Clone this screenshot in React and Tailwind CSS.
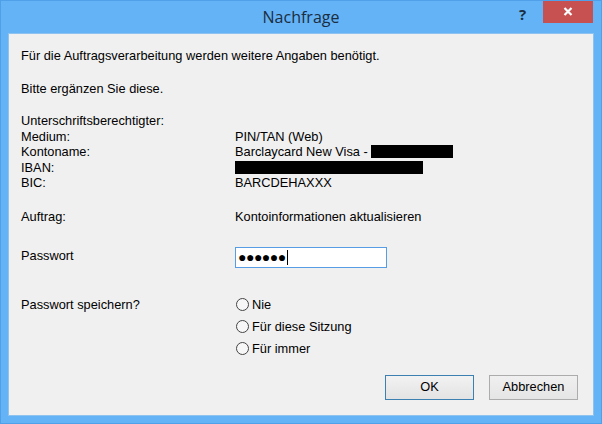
export default function App() {
  const body = { fontFamily: '"Liberation Sans", Arial, sans-serif' };

  const Radio = ({ label }) => (
    <div className="flex items-center h-[22px]">
      <span className="w-[13px] h-[13px] rounded-full border border-[#444] bg-[#f7f7f7] ml-[1px] mr-[3px]" />
      <span>{label}</span>
    </div>
  );

  return (
    <div className="w-[602px] h-[424px] bg-[#64b3f7] border border-[#4f9fe9] flex flex-col overflow-hidden">
      {/* Title bar */}
      <div className="relative h-[32px] shrink-0">
        <div
          className="absolute left-0 right-0 top-[4px] text-center text-[16px] text-[#1b2d40]"
          style={{ fontFamily: '"Open Sans", "Noto Sans", sans-serif' }}
        >
          Nachfrage
        </div>
        <div
          className="absolute left-[518px] top-[2px] text-[15px] font-bold text-[#1b2d40]"
          style={{ fontFamily: '"Open Sans", sans-serif' }}
        >
          ?
        </div>
        <div className="absolute left-[542px] top-[-1px] w-[50px] h-[23px] bg-[#c75050] flex items-center justify-center">
          <svg width="10" height="9" viewBox="0 0 10 9">
            <path d="M1.5 1 L8.5 8 M8.5 1 L1.5 8" stroke="#fff" strokeWidth="2.2" />
          </svg>
        </div>
      </div>

      {/* Client area */}
      <div
        className="flex-1 mx-[7px] mb-[7px] bg-[#f0f0f0] border border-[#8ec3f0] pl-[12px] pr-[15px] pt-[14px] text-[12.8px] text-black"
        style={body}
      >
        <div className="leading-[15px]">Für die Auftragsverarbeitung werden weitere Angaben benötigt.</div>
        <div className="leading-[15px] mt-[18px]">Bitte ergänzen Sie diese.</div>

        <div className="grid grid-cols-[214px_1fr] leading-[15.5px] mt-[17px]">
          <div className="col-span-2">Unterschriftsberechtigter:</div>
          <div>Medium:</div>
          <div>PIN/TAN (Web)</div>
          <div>Kontoname:</div>
          <div className="flex items-center">
            <span>Barclaycard New Visa -&nbsp;</span>
            <span className="w-[82px] h-[13px] bg-black" />
          </div>
          <div>IBAN:</div>
          <div className="flex items-center">
            <span className="w-[188px] h-[13px] bg-black" />
          </div>
          <div>BIC:</div>
          <div>BARCDEHAXXX</div>
        </div>

        <div className="grid grid-cols-[214px_1fr] leading-[15px] mt-[18px]">
          <div>Auftrag:</div>
          <div>Kontoinformationen aktualisieren</div>
        </div>

        <div className="grid grid-cols-[214px_1fr] mt-[23px]">
          <div className="pt-[1px] leading-[15px]">Passwort</div>
          <div className="w-[152px] h-[21px] border border-[#569de5] bg-white flex items-center pl-[2px]">
            <span className="text-[14px] tracking-[-0.5px] leading-none">●●●●●●</span>
            <span className="w-[1px] h-[15px] bg-black ml-[1px]" />
          </div>
        </div>

        <div className="grid grid-cols-[214px_1fr] mt-[26px]">
          <div className="h-[22px] flex items-center">Passwort speichern?</div>
          <div>
            <Radio label="Nie" />
            <Radio label="Für diese Sitzung" />
            <Radio label="Für immer" />
          </div>
        </div>

        <div className="flex justify-end gap-[15px] mt-[15px]">
          <button className="w-[89px] h-[25px] border border-[#3c7fb1] bg-gradient-to-b from-[#f2f2f2] to-[#e3e3e3] text-[12.8px]">
            OK
          </button>
          <button className="w-[89px] h-[25px] border border-[#acacac] bg-gradient-to-b from-[#f0f0f0] to-[#e5e5e5] text-[12.8px]">
            Abbrechen
          </button>
        </div>
      </div>
    </div>
  );
}
